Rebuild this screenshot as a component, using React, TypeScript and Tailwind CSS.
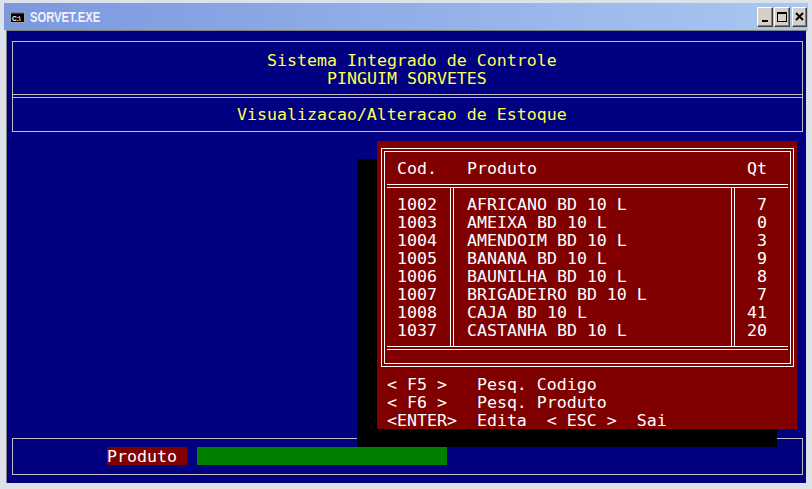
import React from "react";

const rows: [string, string, string][] = [
  ["1002", "AFRICANO BD 10 L", "7"],
  ["1003", "AMEIXA BD 10 L", "0"],
  ["1004", "AMENDOIM BD 10 L", "3"],
  ["1005", "BANANA BD 10 L", "9"],
  ["1006", "BAUNILHA BD 10 L", "8"],
  ["1007", "BRIGADEIRO BD 10 L", "7"],
  ["1008", "CAJA BD 10 L", "41"],
  ["1037", "CASTANHA BD 10 L", "20"],
];

function TitleButton({ children, w = "w-[16px]" }: { children: React.ReactNode; w?: string }) {
  return (
    <div
      className={`${w} h-[20px] bg-[#d4d0c8] border-t border-l border-white border-b border-r border-b-[#404040] border-r-[#404040] shadow-[inset_-1px_-1px_0_#808080] flex items-center justify-center`}
    >
      {children}
    </div>
  );
}

export default function App() {
  return (
    <div className="w-[812px] h-[489px] bg-[#dce1ea] flex flex-col overflow-hidden">
      {/* Title bar */}
      <div className="mt-[3px] ml-[4px] mr-[4px] h-[27px] bg-linear-to-r from-[#7b98de] to-[#a9c7f1] flex items-center">
        <svg width="15" height="12" viewBox="0 0 15 12" className="ml-[6px]">
          <rect x="0.5" y="0.5" width="14" height="11" fill="#000" stroke="#9aa0a8" />
          <rect x="1" y="1" width="13" height="1.5" fill="#6c7ea8" />
          <text x="2" y="9.5" fontSize="6.5" fill="#fff" fontFamily="'Liberation Sans', sans-serif" fontWeight="bold">
            C:\
          </text>
        </svg>
        <span className="ml-[5px] inline-block origin-left scale-x-[0.8] text-[14px] leading-none font-bold text-[#eef2ff] font-['Liberation_Sans',sans-serif]">
          SORVET.EXE
        </span>
        <div className="ml-auto mr-[1px] flex items-center">
          <TitleButton>
            <svg width="8" height="12" viewBox="0 0 8 12">
              <rect x="1" y="9" width="6" height="2" fill="#000" />
            </svg>
          </TitleButton>
          <div className="w-[1px]" />
          <TitleButton>
            <svg width="10" height="10" viewBox="0 0 10 10">
              <rect x="0.5" y="0.5" width="9" height="9" fill="none" stroke="#000" />
              <rect x="0" y="0" width="10" height="2" fill="#000" />
            </svg>
          </TitleButton>
          <div className="w-[2px]" />
          <TitleButton w="w-[15px]">
            <svg width="9" height="9" viewBox="0 0 9 9">
              <path d="M1 1 L8 8 M8 1 L1 8" stroke="#000" strokeWidth="2" />
            </svg>
          </TitleButton>
        </div>
      </div>

      {/* Console body */}
      <div className="ml-[6px] w-[801px] border-l border-t border-[#808080]">
        <div className="relative w-[799px] h-[452px] bg-[#000080] flex flex-col font-['DejaVu_Sans_Mono',monospace] text-[16.6px] leading-[20px] whitespace-pre">
          {/* Header box */}
          <div className="mt-[10px] ml-[5px] w-[791px] border border-[#c0c0c0] text-[#ffff55]">
            <div className="pt-[9px] pb-[7px]">
              <div className="pl-[254px] h-[18px]">Sistema Integrado de Controle</div>
              <div className="pl-[314px] h-[18px]">PINGUIM SORVETES</div>
            </div>
            <div className="h-[4px] border-y border-[#c0c0c0]" />
            <div className="pt-[7px] pb-[8px]">
              <div className="pl-[224px] h-[18px]">Visualizacao/Alteracao de Estoque</div>
            </div>
          </div>

          <div className="flex-1" />

          {/* Bottom box */}
          <div className="mb-[8px] ml-[5px] w-[791px] border border-[#c0c0c0] pt-[8px] pb-[9px]">
            <div className="flex h-[18px]">
              <div className="ml-[94px] w-[80px] h-[18px] bg-[#800000] text-white">Produto</div>
              <div className="ml-[10px] w-[250px] h-[18px] bg-[#008000]" />
            </div>
          </div>

          {/* Popup shadow */}
          <div className="absolute left-[350px] top-[128px] w-[420px] h-[288px] bg-black" />

          {/* Popup */}
          <div className="absolute left-[370px] top-[110px] w-[420px] h-[288px] bg-[#800000] text-white pt-[7px] pl-[4px]">
            <div className="w-[413px] border border-white p-[2px]">
              <div className="border border-white">
                <div className="pt-[7px] mx-[2px] flex h-[25px]">
                  <div className="w-[63px] pl-[10px] h-[18px]">Cod.</div>
                  <div className="w-[4px]" />
                  <div className="w-[277px] pl-[13px] h-[18px]">Produto</div>
                  <div className="w-[4px]" />
                  <div className="flex-1 pr-[21px] text-right h-[18px]">Qt</div>
                </div>
                <div className="mt-[7px] mx-[2px] h-[4px] border-y border-white" />
                <div className="mx-[2px] flex h-[158px]">
                  <div className="w-[63px] pl-[10px] pt-[7px]">
                    {rows.map((r) => (
                      <div key={r[0]} className="h-[18px]">{r[0]}</div>
                    ))}
                  </div>
                  <div className="w-[4px] border-x border-white" />
                  <div className="w-[277px] pl-[13px] pt-[7px]">
                    {rows.map((r) => (
                      <div key={r[0]} className="h-[18px]">{r[1]}</div>
                    ))}
                  </div>
                  <div className="w-[4px] border-x border-white" />
                  <div className="flex-1 pr-[21px] pt-[7px] text-right">
                    {rows.map((r) => (
                      <div key={r[0]} className="h-[18px]">{r[2]}</div>
                    ))}
                  </div>
                </div>
                <div className="mx-[2px] h-[4px] border-y border-white" />
                <div className="h-[13px]" />
              </div>
            </div>
            <div className="mt-[8px] pl-[6px]">
              <div className="h-[18px]">{"< F5 >   Pesq. Codigo"}</div>
              <div className="h-[18px]">{"< F6 >   Pesq. Produto"}</div>
              <div className="h-[18px]">{"<ENTER>  Edita  < ESC >  Sai"}</div>
            </div>
          </div>
        </div>
      </div>
    </div>
  );
}
